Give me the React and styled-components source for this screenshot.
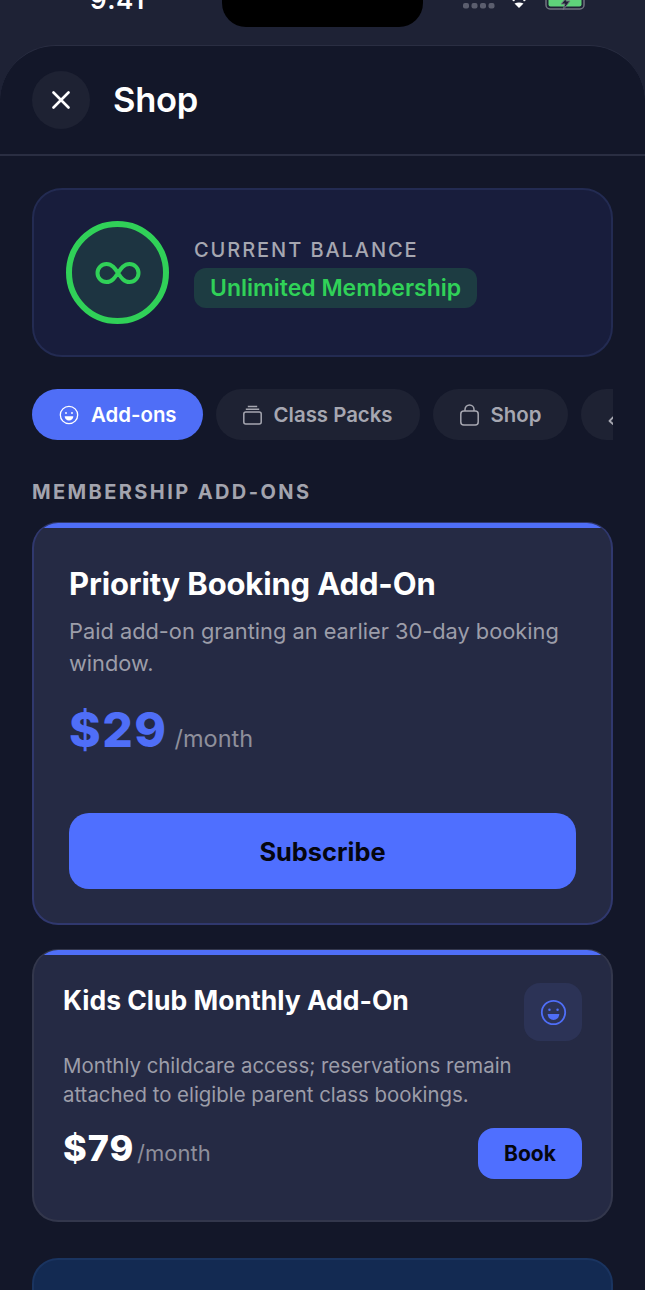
import React from "react";
import styled, { createGlobalStyle } from "styled-components";

const Global = createGlobalStyle`
  html, body { margin: 0; padding: 0; background: #1e2235; }
  body { width: 645px; height: 1290px; overflow: hidden; font-family: Inter, "Liberation Sans", sans-serif; }
  * { box-sizing: border-box; }
`;

const Page = styled.div`
  width: 645px;
  height: 1290px;
  overflow: hidden;
  background: #1e2235;
  display: flex;
  flex-direction: column;
`;

const StatusBar = styled.div`
  height: 45px;
  flex: none;
  display: flex;
  align-items: flex-start;
  justify-content: space-between;
`;

const Time = styled.div`
  width: 222px;
  height: 13px;
  padding-left: 90px;
  display: flex;
  align-items: flex-end;
  overflow: hidden;
  font-size: 26px;
  line-height: 26px;
  font-weight: 600;
  color: #ffffff;
  letter-spacing: 0.6px;
`;

const Notch = styled.div`
  width: 201px;
  height: 27px;
  background: #000;
  border-radius: 0 0 24px 24px;
`;

const StatusIcons = styled.div`
  width: 222px;
  display: flex;
  align-items: flex-start;
  padding-left: 40px;
  svg { display: block; }
`;

const Sheet = styled.div`
  flex: 1;
  background: #131729;
  border-radius: 56px 56px 0 0;
  border-top: 1px solid #2a2e42;
  overflow: hidden;
`;

const Header = styled.header`
  height: 111px;
  margin-top: -1px;
  padding: 0 32px;
  display: flex;
  align-items: center;
  gap: 23px;
  border-bottom: 2px solid #2a2e42;
`;

const CloseButton = styled.button`
  width: 58px;
  height: 58px;
  border: none;
  border-radius: 50%;
  background: #1e2233;
  color: #fff;
  display: flex;
  align-items: center;
  justify-content: center;
  padding: 0;
`;

const Title = styled.h1`
  margin: 0;
  font-size: 34.5px;
  line-height: 40px;
  font-weight: 600;
  letter-spacing: -0.3px;
  color: #fff;
`;

const Body = styled.main`
  padding: 32px 32px 0;
`;

const BalanceCard = styled.section`
  height: 169px;
  border-radius: 30px;
  border: 2px solid #232b52;
  background: #181d3c;
  padding: 0 32px;
  display: flex;
  align-items: center;
  gap: 25px;
`;

const Ring = styled.div`
  width: 103px;
  height: 103px;
  flex: none;
  border-radius: 50%;
  border: 6px solid #30d158;
  background: #1d3441;
  display: flex;
  align-items: center;
  justify-content: center;
`;

const BalanceText = styled.div`
  display: flex;
  flex-direction: column;
  align-items: flex-start;
  gap: 6px;
`;

const BalanceLabel = styled.div`
  font-size: 20px;
  line-height: 24px;
  font-weight: 500;
  letter-spacing: 1.93px;
  color: #a6a7b1;
`;

const MemberPill = styled.div`
  height: 40px;
  padding: 0 16px;
  border-radius: 12px;
  background: #1d3c42;
  color: #30d158;
  font-size: 23px;
  line-height: 40px;
  font-weight: 600;
  white-space: nowrap;
`;

const Tabs = styled.nav`
  margin-top: 32px;
  display: flex;
  gap: 13px;
  overflow: hidden;
`;

const Tab = styled.div`
  height: 51px;
  flex: none;
  padding: 0 ${(p) => (p.$active ? 26 : 27)}px 0 27px;
  border-radius: 26px;
  display: flex;
  align-items: center;
  gap: 12px;
  font-size: 20.4px;
  font-weight: 600;
  background: ${(p) => (p.$active ? "#4f6ef7" : "#1e2233")};
  color: ${(p) => (p.$active ? "#ffffff" : "#a6a7b1")};
`;

const SectionLabel = styled.h2`
  margin: 40px 0 18px;
  height: 24px;
  font-size: 20px;
  line-height: 24px;
  font-weight: 700;
  letter-spacing: 2.4px;
  color: #a3a4ae;
`;

const Card = styled.article`
  position: relative;
  overflow: hidden;
  background: #252a44;
  border: 2px solid ${(p) => p.$border};
  border-top-width: 1px;
  border-radius: 26px;

  &::before {
    content: "";
    position: absolute;
    top: 0;
    left: 0;
    right: 0;
    height: 5px;
    background: #4f6ef7;
  }
`;

const FeatureCard = styled(Card)`
  height: 403px;
  padding: 39px 35px 0;
`;

const FeatureTitle = styled.h3`
  margin: 0;
  font-size: 31px;
  line-height: 44px;
  font-weight: 700;
  letter-spacing: -0.15px;
  color: #fff;
`;

const FeatureDesc = styled.p`
  margin: 9px 0 0;
  font-size: 21.8px;
  line-height: 32px;
  color: #9c9da9;
`;

const FeaturePrice = styled.div`
  margin-top: 20px;
  display: flex;
  align-items: baseline;
  gap: 7px;
`;

const FeatureAmount = styled.span`
  font-size: 48px;
  line-height: 62px;
  font-weight: 800;
  letter-spacing: 1.5px;
  color: #4f6ef7;
`;

const Per = styled.span`
  font-size: ${(p) => p.$size}px;
  color: #8e8f9b;
`;

const SubscribeButton = styled.button`
  display: block;
  width: 100%;
  height: 76px;
  margin-top: 52px;
  border: none;
  border-radius: 20px;
  background: #4f6fff;
  color: #05060f;
  font-family: inherit;
  font-size: 25.4px;
  font-weight: 700;
`;

const CompactCard = styled(Card)`
  height: 273px;
  margin-top: 24px;
  padding: 33px 29px 0;
`;

const CompactTop = styled.div`
  display: flex;
  justify-content: space-between;
  align-items: flex-start;
`;

const CompactTitle = styled.h3`
  margin: 0;
  font-size: 26.5px;
  line-height: 34px;
  font-weight: 700;
  color: #fff;
`;

const IconTile = styled.div`
  width: 58px;
  height: 58px;
  border-radius: 16px;
  background: #2c3356;
  display: flex;
  align-items: center;
  justify-content: center;
`;

const CompactDesc = styled.p`
  margin: 10px 0 0;
  font-size: 20.4px;
  line-height: 29px;
  color: #9c9da9;
`;

const CompactFooter = styled.div`
  margin-top: 17px;
  display: flex;
  align-items: center;
  justify-content: space-between;
`;

const CompactPrice = styled.div`
  display: flex;
  align-items: baseline;
  gap: 3px;
  padding-bottom: 10px;
`;

const CompactAmount = styled.span`
  font-size: 36px;
  font-weight: 800;
  letter-spacing: 0.9px;
  color: #fff;
`;

const BookButton = styled.button`
  width: 104px;
  height: 51px;
  border: none;
  border-radius: 16px;
  background: #4f6fff;
  color: #05060f;
  font-family: inherit;
  font-size: 21px;
  font-weight: 700;
`;

const NextCard = styled.article`
  height: 120px;
  margin-top: 36px;
  border: 2px solid #1a3460;
  border-radius: 26px;
  background: #132a52;
  padding: 28px 0 0 40px;
`;

const Smile = ({ size = 24, color = "currentColor" }) => (
  <svg width={size} height={size} viewBox="0 0 24 24" fill="none" stroke={color} strokeWidth="1.6">
    <circle cx="12" cy="12" r="10.4" />
    <circle cx="8.4" cy="9.6" r="1.1" fill={color} stroke="none" />
    <circle cx="15.6" cy="9.6" r="1.1" fill={color} stroke="none" />
    <path d="M6.8 13.4h10.4a5.2 5.2 0 0 1-10.4 0z" fill={color} stroke="none" />
  </svg>
);

const Stack = () => (
  <svg width="19" height="20" viewBox="0 0 19 20" fill="none" stroke="currentColor" strokeWidth="1.5">
    <rect x="0.8" y="7" width="17.4" height="12" rx="2" />
    <path d="M2.800 4.200h13.400M4.800 1.400h9.400" />
  </svg>
);

const Bag = () => (
  <svg width="19" height="22" viewBox="0 0 19 22" fill="none" stroke="currentColor" strokeWidth="1.5">
    <rect x="0.8" y="7" width="17.400" height="14" rx="3" />
    <path d="M5 7V5.500a4.500 4.500 0 0 1 9 0V7" />
  </svg>
);

const Tag = () => (
  <svg width="60" height="20" viewBox="0 0 60 20" fill="none" stroke="currentColor" strokeWidth="1.8" strokeLinejoin="round">
    <path d="M5.500 12 L1.500 16 L5.500 19.500" />
  </svg>
);

export default function App() {
  return (
    <Page>
      <Global />
      <StatusBar>
        <Time>9:41</Time>
        <Notch />
        <StatusIcons>
          <svg width="130" height="12" viewBox="0 0 130 12">
            <g fill="#5b5e6e">
              <rect x="0" y="3" width="6" height="5.500" rx="2" />
              <rect x="8.500" y="3" width="6" height="5.500" rx="2" />
              <rect x="17" y="3" width="6" height="5.500" rx="2" />
              <rect x="25.500" y="3" width="6" height="5.500" rx="2" />
            </g>
            <path d="M49 0h3l-1 1.500zM60 0h3l-2 1.500z" fill="#fff" />
            <path d="M51.500 3.500q4.500-2 9 0L56 8z" fill="#fff" />
            <rect x="83" y="-6" width="38" height="15" rx="4" fill="none" stroke="#70737f" strokeWidth="1.5" />
            <rect x="85.500" y="-4" width="33" height="10.500" rx="2" fill="#5fd37a" />
            <path d="M105-4l-7 8h4l-2 6 7-9h-4l2-5z" fill="#1e2235" stroke="#70737f" strokeWidth="1" />
          </svg>
        </StatusIcons>
      </StatusBar>
      <Sheet>
        <Header>
          <CloseButton aria-label="Close">
            <svg width="18" height="18" viewBox="0 0 18 18" stroke="#fff" strokeWidth="2.6" strokeLinecap="round">
              <path d="M1.500 1.500l15 15M16.500 1.500l-15 15" />
            </svg>
          </CloseButton>
          <Title>Shop</Title>
        </Header>
        <Body>
          <BalanceCard>
            <Ring>
              <svg width="46" height="22" viewBox="-1 0 46 22" fill="none" stroke="#30d158" strokeWidth="4" strokeLinecap="round">
                <path d="M22 11c-3-4.500-6-9-11.500-9a9 9 0 0 0 0 18c5.500 0 8.500-4.500 11.500-9s6-9 11.500-9a9 9 0 0 1 0 18c-5.500 0-8.500-4.500-11.500-9z" />
              </svg>
            </Ring>
            <BalanceText>
              <BalanceLabel>CURRENT BALANCE</BalanceLabel>
              <MemberPill>Unlimited Membership</MemberPill>
            </BalanceText>
          </BalanceCard>
          <Tabs>
            <Tab $active><Smile size={20} />Add-ons</Tab>
            <Tab><Stack />Class Packs</Tab>
            <Tab><Bag />Shop</Tab>
            <Tab><Tag /></Tab>
          </Tabs>
          <SectionLabel>MEMBERSHIP ADD-ONS</SectionLabel>
          <FeatureCard $border="#30386e">
            <FeatureTitle>Priority Booking Add-On</FeatureTitle>
            <FeatureDesc>Paid add-on granting an earlier 30-day booking window.</FeatureDesc>
            <FeaturePrice>
              <FeatureAmount>$29</FeatureAmount>
              <Per $size={23.5}>/month</Per>
            </FeaturePrice>
            <SubscribeButton>Subscribe</SubscribeButton>
          </FeatureCard>
          <CompactCard $border="#33374c">
            <CompactTop>
              <CompactTitle>Kids Club Monthly Add-On</CompactTitle>
              <IconTile><Smile size={27} color="#4f6ef7" /></IconTile>
            </CompactTop>
            <CompactDesc>Monthly childcare access; reservations remain attached to eligible parent class bookings.</CompactDesc>
            <CompactFooter>
              <CompactPrice>
                <CompactAmount>$79</CompactAmount>
                <Per $size={22}>/month</Per>
              </CompactPrice>
              <BookButton>Book</BookButton>
            </CompactFooter>
          </CompactCard>
          <NextCard>
            <svg width="60" height="4" viewBox="0 0 60 4" fill="#4f9be8">
              <circle cx="2" cy="2" r="2" />
              <circle cx="46" cy="2" r="1.500" />
            </svg>
          </NextCard>
        </Body>
      </Sheet>
    </Page>
  );
}
